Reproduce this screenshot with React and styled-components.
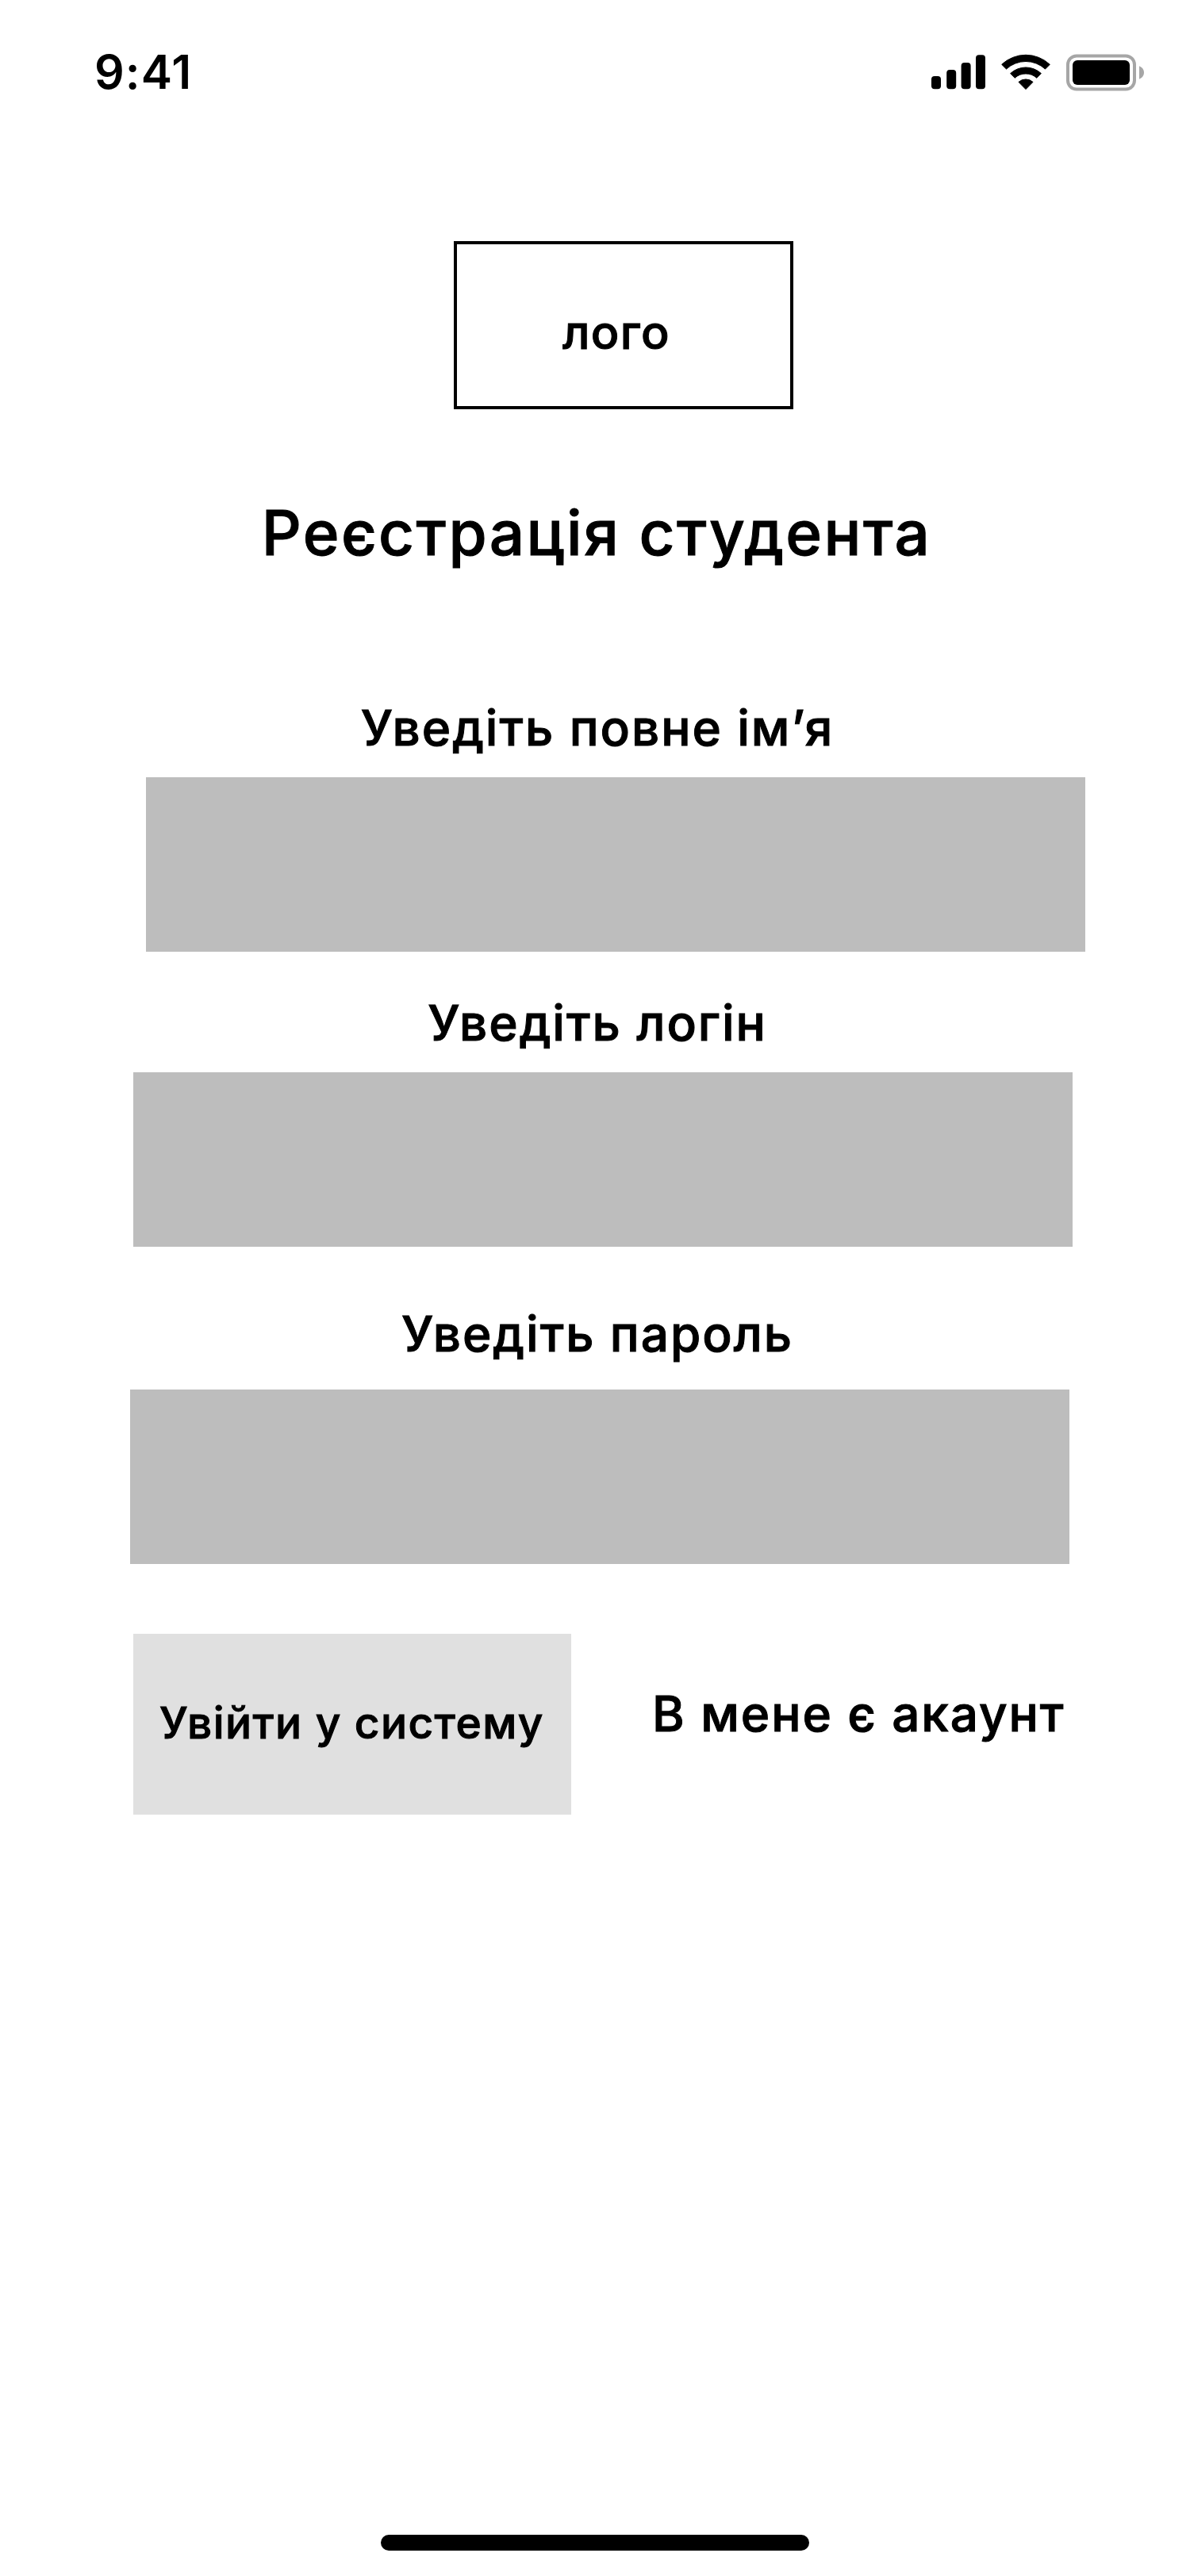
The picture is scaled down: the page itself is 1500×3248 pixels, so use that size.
import React from 'react';
import styled, { createGlobalStyle } from 'styled-components';

const GlobalStyle = createGlobalStyle`
  *, *::before, *::after { box-sizing: border-box; }
  body {
    margin: 0;
    background: #fff;
    color: #000;
    font-family: Inter, "Noto Sans", sans-serif;
    font-weight: 500;
    -webkit-text-stroke: 1px #000;
  }
`;

const Screen = styled.main`
  display: flex;
  flex-direction: column;
  width: 1500px;
  height: 3248px;
  padding-bottom: 32px;
  background: #fff;
`;

const StatusBar = styled.header`
  display: flex;
  align-items: center;
  justify-content: space-between;
  height: 176px;
  padding: 6px 58px 0 119px;
`;

const Clock = styled.time`
  font-size: 59px;
  font-weight: 600;
  line-height: 72px;
  letter-spacing: 1.1px;
  -webkit-text-stroke: 0;
`;

const StatusIcons = styled.div`
  display: flex;
  align-items: center;
  gap: 20px;

  svg { display: block; }
`;

const LogoBox = styled.div`
  display: flex;
  align-items: center;
  width: 428px;
  height: 212px;
  margin: 128px 0 0 572px;
  padding: 17px 0 0 133px;
  border: 4px solid #000;
  font-size: 59px;
  line-height: 72px;
  letter-spacing: 1.3px;
`;

const Title = styled.h1`
  margin: 108px 0 0;
  padding-left: 4px;
  font-size: 78px;
  font-weight: 500;
  line-height: 96px;
  letter-spacing: 2.42px;
  text-align: center;
`;

const Form = styled.form`
  display: flex;
  flex-direction: column;
`;

const Field = styled.div`
  display: flex;
  flex-direction: column;
  gap: ${(p) => p.$gap}px;
  margin-top: ${(p) => p.$top}px;
`;

const Label = styled.label`
  padding-left: 6px;
  font-size: 62px;
  line-height: 76px;
  letter-spacing: 1.95px;
  text-align: center;
`;

const Input = styled.input`
  width: 1184px;
  height: 220px;
  margin: 0 0 0 ${(p) => p.$left}px;
  padding: 0 40px;
  border: 0;
  border-radius: 0;
  outline: 0;
  background: #bdbdbd;
  font: inherit;
  font-size: 62px;
`;

const Actions = styled.div`
  display: flex;
  margin: 88px 0 0 168px;
`;

const SubmitButton = styled.button`
  width: 552px;
  height: 228px;
  padding: 0 0 4px 33px;
  border: 0;
  background: #e0e0e0;
  color: #000;
  font: inherit;
  font-size: 55px;
  line-height: 68px;
  letter-spacing: 1.42px;
  text-align: left;
  white-space: nowrap;
  -webkit-text-stroke: inherit;
`;

const AccountLink = styled.a`
  margin: 63px 0 0 102px;
  font-size: 62px;
  line-height: 76px;
  letter-spacing: 1.96px;
  white-space: nowrap;
`;

const HomeIndicator = styled.div`
  width: 540px;
  height: 20px;
  margin: auto auto 0;
  border-radius: 10px;
  background: #000;
`;

const SignalIcon = () => (
  <svg width="68" height="44" viewBox="0 0 68 44">
    <rect x="0" y="27" width="12" height="16.2" rx="4" />
    <rect x="19.2" y="19" width="12" height="24.2" rx="4" />
    <rect x="37.6" y="10" width="12" height="33.2" rx="4" />
    <rect x="56" y="0.2" width="12" height="43" rx="4" />
  </svg>
);

const WifiIcon = () => (
  <svg width="62" height="46" viewBox="0 0 62 46" stroke="#000" strokeWidth="1" strokeLinejoin="round">
    <path d="M.7 13.3A44.2 44.2 0 0 1 61.3 13.3L55.5 19.1A36 36 0 0 0 6.5 19.1Z" />
    <path d="M11.6 24.6A28.5 28.5 0 0 1 50.4 24.6L44.8 30.3A20.5 20.5 0 0 0 17.2 30.3Z" />
    <path d="M22 35.4A13.5 13.5 0 0 1 40 35.4L31 44.6Z" />
  </svg>
);

const BatteryIcon = () => (
  <svg width="98" height="47" viewBox="0 0 98 47">
    <rect x="2" y="2.4" width="84" height="42.2" rx="11" fill="none" stroke="#a6a6a6" strokeWidth="4" />
    <rect x="8" y="8" width="72" height="31" rx="6" />
    <path d="M92 15.3C95.7 16.8 98 19.8 98 23.5S95.7 30.2 92 31.7Z" fill="#a6a6a6" />
  </svg>
);

const fields = [
  { id: 'name', label: 'Уведіть повне ім’я', type: 'text', top: 160, gap: 24, left: 184 },
  { id: 'login', label: 'Уведіть логін', type: 'text', top: 52, gap: 24, left: 168 },
  { id: 'password', label: 'Уведіть пароль', type: 'password', top: 72, gap: 32, left: 164 },
];

export default function App() {
  return (
    <>
      <GlobalStyle />
      <Screen>
        <StatusBar>
          <Clock>9:41</Clock>
          <StatusIcons>
            <SignalIcon />
            <WifiIcon />
            <BatteryIcon />
          </StatusIcons>
        </StatusBar>
        <LogoBox>лого</LogoBox>
        <Title>Реєстрація студента</Title>
        <Form>
          {fields.map((f) => (
            <Field key={f.id} $top={f.top} $gap={f.gap}>
              <Label htmlFor={f.id}>{f.label}</Label>
              <Input id={f.id} type={f.type} $left={f.left} />
            </Field>
          ))}
          <Actions>
            <SubmitButton type="button">Увійти у систему</SubmitButton>
            <AccountLink>В мене є акаунт</AccountLink>
          </Actions>
        </Form>
        <HomeIndicator />
      </Screen>
    </>
  );
}
